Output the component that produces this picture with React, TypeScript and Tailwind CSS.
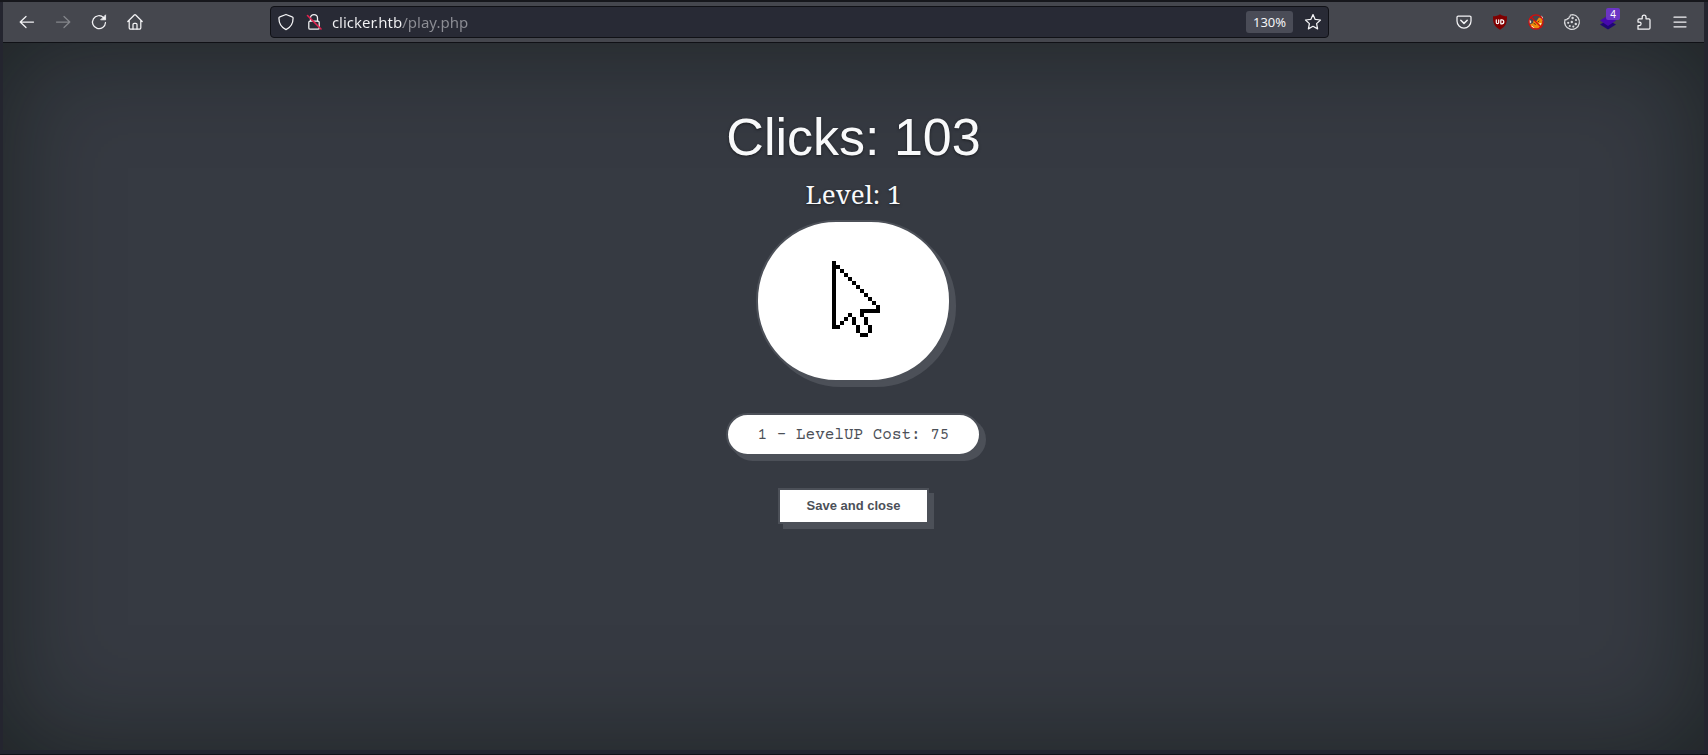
import { useState } from "react";
import type { ReactNode } from "react";

interface ToolbarButtonProps {
  label: string;
  disabled?: boolean;
  children: ReactNode;
}

const ToolbarButton = ({ label, disabled, children }: ToolbarButtonProps) => (
  <button
    type="button"
    aria-label={label}
    disabled={disabled}
    className="relative flex h-8 w-9 shrink-0 items-center justify-center rounded text-[#f4f4f6] disabled:text-[#84868b]"
  >
    {children}
  </button>
);

interface IconProps {
  children: ReactNode;
}

const Icon = ({ children }: IconProps) => (
  <svg
    viewBox="0 0 16 16"
    className="size-4 overflow-visible"
    fill="none"
    stroke="currentColor"
    strokeWidth="1.25"
    strokeLinecap="round"
    strokeLinejoin="round"
  >
    {children}
  </svg>
);

// Cells of the pixel cursor: [x, y, width, height]
const CURSOR_CELLS = [
  [0, 0, 1, 17],
  [1, 1, 1, 1],
  [2, 2, 1, 1],
  [3, 3, 1, 1],
  [4, 4, 1, 1],
  [5, 5, 1, 1],
  [6, 6, 1, 1],
  [7, 7, 1, 1],
  [8, 8, 1, 1],
  [9, 9, 1, 1],
  [10, 10, 1, 1],
  [11, 11, 1, 1],
  [7, 12, 5, 1],
  [7, 13, 1, 1],
  [8, 14, 1, 2],
  [9, 16, 1, 2],
  [7, 18, 2, 1],
  [6, 16, 1, 2],
  [5, 14, 1, 2],
  [4, 13, 1, 1],
  [3, 14, 1, 1],
  [2, 15, 1, 1],
  [1, 16, 1, 1],
];

const CursorIcon = () => (
  <svg viewBox="0 0 12 19" className="h-[76px] w-12" fill="#000">
    {CURSOR_CELLS.map(([x, y, w, h]) => (
      <rect key={`${x}-${y}`} x={x} y={y} width={w} height={h} />
    ))}
  </svg>
);

const AddressBar = () => {
  const [url, setUrl] = useState("clicker.htb/play.php");

  return (
    <div className="mx-px flex h-8 min-w-0 flex-9 items-center rounded border border-[#101116] bg-[#282a35] px-[7px]">
      <button type="button" aria-label="Tracking protection" className="shrink-0 text-[#f4f4f6]">
        <Icon>
          <path d="M8 .5 14.200 2.800c.6.2.9.6.9 1.200 0 5-2.400 9.400-7.100 11.600C3.300 13.400.9 9 .9 4c0-.6.3-1 .9-1.200Z" />
        </Icon>
      </button>
      <button
        type="button"
        aria-label="Connection not secure"
        className="ml-3 shrink-0 text-[#f4f4f6]"
      >
        <Icon>
          <path d="M4.500 7V4a3.500 3.500 0 0 1 7 0v3" />
          <rect x="2.800" y="7.200" width="10.400" height="8" rx="1.300" />
          <path d="M1.500 1.500 15 15" stroke="#e2224f" strokeWidth="1.600" />
        </Icon>
      </button>
      <input
        type="text"
        aria-label="Address"
        value={url}
        onChange={(e) => setUrl(e.target.value)}
        className="ml-2.5 min-w-0 flex-1 bg-[linear-gradient(to_right,#f4f4f6_71px,#8d8e95_71px)] bg-clip-text font-['Noto_Sans',sans-serif] text-[15px] text-transparent caret-white outline-none"
      />
      <button
        type="button"
        className="mr-3 h-[22px] shrink-0 rounded-[3px] bg-[#4a4c57] px-[7px] text-[13px] leading-[22px] text-[#f4f4f6]"
      >
        130%
      </button>
      <button type="button" aria-label="Bookmark this page" className="shrink-0 text-[#f4f4f6]">
        <Icon>
          <path d="m8 .6 2.200 4.800 5.300.6-3.900 3.600 1 5.300L8 12.300l-4.600 2.600 1-5.300L.5 6l5.300-.6Z" />
        </Icon>
      </button>
    </div>
  );
};

const BrowserToolbar = () => (
  <header className="flex h-[41px] items-center border-b border-[#101116] bg-[#45474e] px-1.5 pt-1 pb-1 font-['Noto_Sans',sans-serif]">
    <div className="flex">
      <ToolbarButton label="Back">
        <Icon>
          <path d="M14.500 8H1.200M7 2.500 1.200 8 7 13.500" />
        </Icon>
      </ToolbarButton>
      <ToolbarButton label="Forward" disabled>
        <Icon>
          <path d="M1.500 8h13.300M9 2.500 14.800 8 9 13.500" />
        </Icon>
      </ToolbarButton>
      <ToolbarButton label="Reload">
        <Icon>
          <path d="M12.600 3.600A6.500 6.500 0 1 0 14.500 8.500" />
          <path d="M14.600 1.200v4.600H10Z" fill="currentColor" strokeWidth="0.800" />
        </Icon>
      </ToolbarButton>
      <ToolbarButton label="Home">
        <Icon>
          <path d="M.8 7.500 7.300 1a1 1 0 0 1 1.400 0l6.500 6.500M2.200 6.300v7.400a1.400 1.400 0 0 0 1.400 1.400h8.800a1.400 1.400 0 0 0 1.400-1.400V6.300" />
          <path d="M6 15v-4.400a1.200 1.200 0 0 1 1.200-1.200h1.600a1.200 1.200 0 0 1 1.200 1.200V15" />
        </Icon>
      </ToolbarButton>
    </div>
    <div className="flex-1" />
    <AddressBar />
    <div className="flex-1" />
    <div className="flex">
      <ToolbarButton label="Save to Pocket">
        <Icon>
          <path d="M2.200 2h11.600a1.200 1.200 0 0 1 1.200 1.200V7a7 7 0 0 1-14 0V3.200A1.200 1.200 0 0 1 2.200 2Z" />
          <path d="M4.800 6.300 8 9.400l3.200-3.100" strokeWidth="1.500" />
        </Icon>
      </ToolbarButton>
      <ToolbarButton label="uBlock Origin">
        <Icon>
          <path
            d="M8 .3c2 1.500 4.200 2 7 2 0 6.200-.6 9.900-7 13.400C1.600 12.200 1 8.500 1 2.300c2.800 0 5-.5 7-2Z"
            fill="#800000"
            stroke="none"
          />
          <path d="M4.300 5.800v2.700a1.200 1.200 0 0 0 2.400 0V5.800" stroke="#fff" strokeWidth="1.200" />
          <path d="M8.800 5.800h1a2 2 0 0 1 0 4h-1Z" stroke="#fff" strokeWidth="1.200" />
        </Icon>
      </ToolbarButton>
      <ToolbarButton label="FoxyProxy">
        <Icon>
          <path d="M1 4.500 3.500 8 1.500 10ZM13.500 1.500l1.500 2v4l-2-3Z" fill="#e8e0d8" stroke="none" />
          <path
            d="m2 10.500 3-1.500.5-2.500L8.500 7l2.500-3.500 3 1 .5 4L13 12l-3 2.500-3-.2-2 .4L2.500 13Z"
            fill="#f08c0c"
            stroke="none"
          />
          <path d="m3.500 11.500 3 2.500-3-.5ZM11 9.500l2.500-.5-1 2Z" fill="#fff" stroke="none" />
          <path d="m6 9.500 1.500.8M10 7.800l1-.8" stroke="#5b3208" strokeWidth="1" />
          <circle cx="8" cy="8" r="7.100" stroke="#d40d0d" strokeWidth="1.200" />
          <path d="m3 3 10 10" stroke="#d40d0d" strokeWidth="1.200" />
        </Icon>
      </ToolbarButton>
      <ToolbarButton label="Cookie editor">
        <Icon>
          <path
            d="M8.800.7A7.400 7.400 0 1 1 1 5.600c1 .5 2 .1 2.300-.9 1.200.2 2-.5 1.800-1.700C6 3 6.500 1.800 6.300 1Z"
            stroke="#d8d9dc"
          />
          <g fill="#d8d9dc" stroke="none">
            <circle cx="8.600" cy="4" r="1.200" />
            <circle cx="12" cy="6" r="1.100" />
            <circle cx="7.800" cy="8" r="1.200" />
            <circle cx="4.200" cy="8.800" r="1.100" />
            <circle cx="11.800" cy="10" r="1.200" />
            <circle cx="5.800" cy="12" r="1.100" />
            <circle cx="9.300" cy="12.600" r="1.100" />
          </g>
        </Icon>
      </ToolbarButton>
      <ToolbarButton label="Wappalyzer, 4 technologies">
        <Icon>
          <path d="m0 10.500 8-4.500 8 4.500-8 5Z" fill="#1f0675" stroke="none" />
          <path d="m0 6.500 8-5 8 5-8 5.500Z" fill="#4608ad" stroke="none" />
        </Icon>
        <span className="absolute top-0.5 right-1.5 h-3 w-3.5 rounded-xs bg-[#6b35c4] text-center text-[10px] leading-3 text-white">
          4
        </span>
      </ToolbarButton>
      <ToolbarButton label="Extensions">
        <Icon>
          <path d="M2 15.200h10.800a1.200 1.200 0 0 0 1.200-1.200V6a1.200 1.200 0 0 0-1.200-1.200H10V3a1.900 1.900 0 0 0-3.800 0v1.800H3.200A1.200 1.200 0 0 0 2 6v2h1.300a1.700 1.700 0 0 1 0 3.600H2Z" />
        </Icon>
      </ToolbarButton>
      <ToolbarButton label="Open application menu">
        <Icon>
          <path d="M2 3.200h12M2 8h12M2 12.800h12" />
        </Icon>
      </ToolbarButton>
    </div>
  </header>
);

export default function App() {
  const [clicks, setClicks] = useState(103);
  const [level, setLevel] = useState(1);
  const cost = 75;

  const handleLevelUp = () => {
    if (clicks < cost) return;
    setClicks((prev) => prev - cost);
    setLevel((prev) => prev + 1);
  };

  return (
    <div className="flex min-h-screen flex-col border-b border-[#111217] bg-[#24252f] pr-1 pb-1 pl-[3px]">
      <div className="-mr-1 -ml-[3px] h-0.5 bg-[#16171c]" />
      <BrowserToolbar />
      <main className="flex flex-1 flex-col items-center bg-[#363a42] pt-[63px] font-['Liberation_Sans',Arial,sans-serif] shadow-[inset_0_0_104px_rgba(5,14,8,0.5)]">
        <h1 className="text-[52px] leading-[62px] text-[#f8f9fa] [text-shadow:0_1px_3px_rgba(0,0,0,0.5)]">
          Clicks: {clicks}
        </h1>
        <h2 className="mt-[11px] font-['Noto_Serif','DejaVu_Serif_Condensed','DejaVu_Serif',serif] text-[26px] leading-[31px] text-[#f8f9fa] [text-shadow:0_1px_3px_rgba(0,0,0,0.5)]">
          Level: {level}
        </h2>
        <button
          type="button"
          aria-label="Click"
          onClick={() => setClicks((prev) => prev + 1)}
          className="mt-2.5 flex h-[162px] w-[195px] items-center justify-center rounded-[80px] border-2 border-[#4c5058] bg-white pb-1 pl-1 shadow-[5px_5px_0_#4c5058]"
        >
          <CursorIcon />
        </button>
        <button
          type="button"
          onClick={handleLevelUp}
          className="mt-[31px] h-[43px] rounded-full border-2 border-[#4c5058] bg-white px-[30px] font-['Courier_Prime','Liberation_Mono',monospace] text-base text-[#4c5058] shadow-[5px_5px_0_#4c5058]"
        >
          {level} - LevelUP Cost: {cost}
        </button>
        <button
          type="button"
          className="mt-8 h-9 border-2 border-[#4c5058] bg-white px-[27px] text-[13px] font-bold text-[#4c5058] shadow-[5px_5px_0_#4c5058]"
        >
          Save and close
        </button>
      </main>
    </div>
  );
}
